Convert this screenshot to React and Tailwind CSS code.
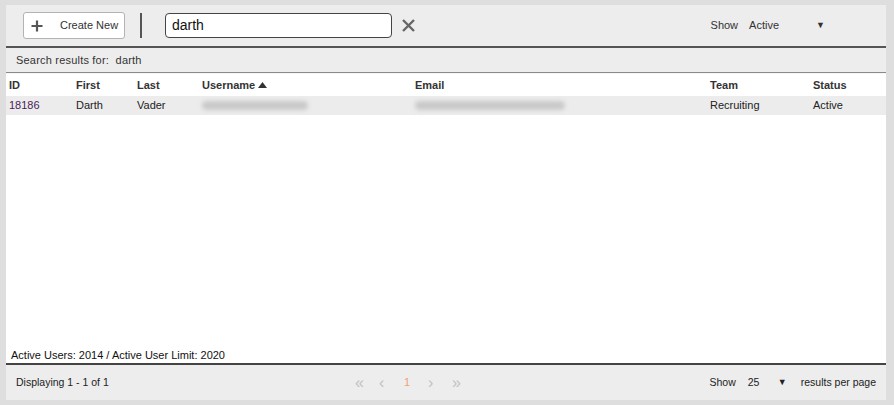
import React from "react";

const columns = [
  { key: "id", label: "ID", w: "w-[67px]" },
  { key: "first", label: "First", w: "w-[61px]" },
  { key: "last", label: "Last", w: "w-[65px]" },
  { key: "username", label: "Username", w: "w-[213px]", sorted: true },
  { key: "email", label: "Email", w: "w-[295px]" },
  { key: "team", label: "Team", w: "w-[103px]" },
  { key: "status", label: "Status", w: "flex-1" },
];

const Blur = ({ width }) => (
  <div className={`h-[9px] ${width} rounded-full bg-[#c9c9c9] blur-[2px]`} />
);

export default function App() {
  return (
    <div className="w-[894px] h-[405px] bg-[#dedede] pl-[6px] pr-[8px] py-[5px] font-['Liberation_Sans',Arial,sans-serif] text-[#222]">
      <div className="h-full bg-[#ededed] flex flex-col">
        {/* toolbar */}
        <div className="h-[43px] border-b-2 border-[#555] flex items-center pl-[17px] pr-[8px]">
          <button className="h-[27px] w-[102px] bg-white border border-[#b3b3b3] rounded-[3px] flex items-center pl-[7px] text-[11px] text-[#333] whitespace-nowrap">
            <svg width="12" height="12" viewBox="0 0 12 12" className="mr-[17px]">
              <path d="M6 0.5v11M0.5 6h11" stroke="#555" strokeWidth="2.2" />
            </svg>
            Create New
          </button>
          <div className="w-[2px] h-[25px] bg-[#555] ml-[15px]" />
          <div className="ml-[23px] w-[227px] h-[25px] bg-white border border-[#444] rounded-[4px] flex items-center px-[6px] text-[14px] text-[#111]">
            darth
          </div>
          <svg width="13" height="13" viewBox="0 0 13 13" className="ml-[10px]">
            <path d="M1 1l11 11M12 1L1 12" stroke="#666" strokeWidth="2.4" />
          </svg>
          <div className="ml-auto flex items-center text-[11px] text-[#333] mr-[53px]">
            <span>Show</span>
            <span className="ml-[11px] w-[67px]">Active</span>
            <span className="text-[9px]">▼</span>
          </div>
        </div>

        {/* search results */}
        <div className="h-[25px] flex items-center pl-[10px] border-b border-[#8a8a8a] text-[11px] tracking-[0.2px] text-[#333]">
          Search results for:&nbsp; darth
        </div>

        {/* table */}
        <div className="flex-1 bg-white flex flex-col border-t border-[#f6f6f6]">
          <div className="flex items-center h-[22px] pl-[3px] text-[11px] font-bold text-[#333]">
            {columns.map((c) => (
              <div key={c.key} className={`${c.w} flex items-center`}>
                {c.label}
                {c.sorted && (
                  <svg width="9" height="6" viewBox="0 0 9 6" className="ml-[3px]">
                    <path d="M0 6L4.5 0L9 6z" fill="#333" />
                  </svg>
                )}
              </div>
            ))}
          </div>
          <div className="flex items-center h-[19px] pl-[3px] text-[11px] bg-[#ececec] text-[#222]">
            <div className="w-[67px] text-[#4a1c5c]">18186</div>
            <div className="w-[61px]">Darth</div>
            <div className="w-[65px]">Vader</div>
            <div className="w-[213px]">
              <Blur width="w-[106px]" />
            </div>
            <div className="w-[295px]">
              <Blur width="w-[150px]" />
            </div>
            <div className="w-[103px]">Recruiting</div>
            <div className="flex-1">Active</div>
          </div>
          <div className="flex-1" />
          <div className="pl-[5px] pb-[1px] text-[11px] text-[#111] leading-[14px]">
            Active Users: 2014 / Active User Limit: 2020
          </div>
        </div>

        {/* footer */}
        <div className="h-[37px] border-t-2 border-[#444] flex items-center pl-[10px] pr-[10px] text-[10.5px] text-[#222]">
          <div className="w-[339px]">Displaying 1 - 1 of 1</div>
          <div className="flex items-center text-[#c2c2c2] text-[16px] leading-none">
            <span className="w-[24px]">«</span>
            <span className="w-[25px]">‹</span>
            <span className="w-[24px] text-[#f0a070] text-[11px]">1</span>
            <span className="w-[24px]">›</span>
            <span>»</span>
          </div>
          <div className="ml-auto flex items-center">
            <span>Show</span>
            <span className="ml-[12px] w-[30px]">25</span>
            <span className="text-[9px]">▼</span>
            <span className="ml-[14px]">results per page</span>
          </div>
        </div>
      </div>
    </div>
  );
}
